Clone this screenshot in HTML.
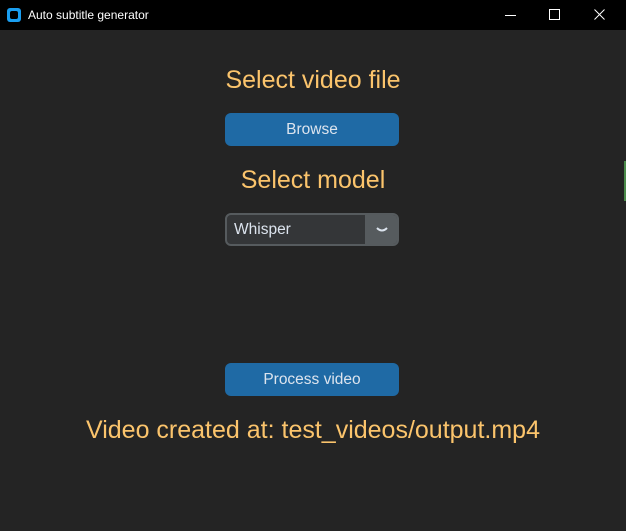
<!DOCTYPE html>
<html><head><style>
body{margin:0;width:626px;height:531px;background:#242424;font-family:"Liberation Sans",sans-serif;position:relative;overflow:hidden}
.tb{position:absolute;left:0;top:0;width:626px;height:30px;background:#000;color:#fff;font-size:12px}
.t{position:absolute;color:#fbc46c;font-size:25px;width:626px;text-align:center;left:0}
.btn{position:absolute;left:225px;width:174px;height:33px;background:#1f6aa5;border-radius:6px;color:#dce4ee;font-size:15.5px;text-align:center;line-height:33px}
</style></head><body>
<div class="tb">
<div style="position:absolute;left:7px;top:8px;width:14px;height:14px;background:#1a9ef0;border-radius:3px"><div style="position:absolute;left:3px;top:3px;width:8px;height:8px;background:#000;border-radius:2px"></div></div>
<span style="position:absolute;left:28px;top:8px">Auto subtitle generator</span>
<div style="position:absolute;left:505px;top:15px;width:11px;height:1px;background:#fff"></div>
<div style="position:absolute;left:549px;top:9px;width:9px;height:9px;border:1px solid #fff"></div>
<svg style="position:absolute;left:594px;top:9px" width="11" height="11"><path d="M0.5 0.5L10.5 10.5M10.5 0.5L0.5 10.5" stroke="#fff" stroke-width="1"/></svg>
</div>
<div class="t" style="top:66px">Select video file</div>
<div class="btn" style="top:113px">Browse</div>
<div class="t" style="top:166px">Select model</div>
<div style="position:absolute;left:225px;top:213px;width:170px;height:29px;background:#343638;border:2px solid #565b5e;border-radius:6px;overflow:hidden">
<div style="position:absolute;right:0;top:0;width:32px;height:29px;background:#565b5e"></div>
<span style="position:absolute;left:7px;top:6px;color:#dce4ee;font-size:15.5px">Whisper</span>
<svg style="position:absolute;right:9px;top:12px" width="12" height="6"><path d="M1 1Q6 6 11 1" stroke="#dce4ee" stroke-width="2" fill="none"/></svg>
</div>
<div class="btn" style="top:363px">Process video</div>
<div class="t" style="top:416px">Video created at: test_videos/output.mp4</div>
<div style="position:absolute;left:624px;top:161px;width:2px;height:40px;background:#4a8a4a"></div>
</body></html>
